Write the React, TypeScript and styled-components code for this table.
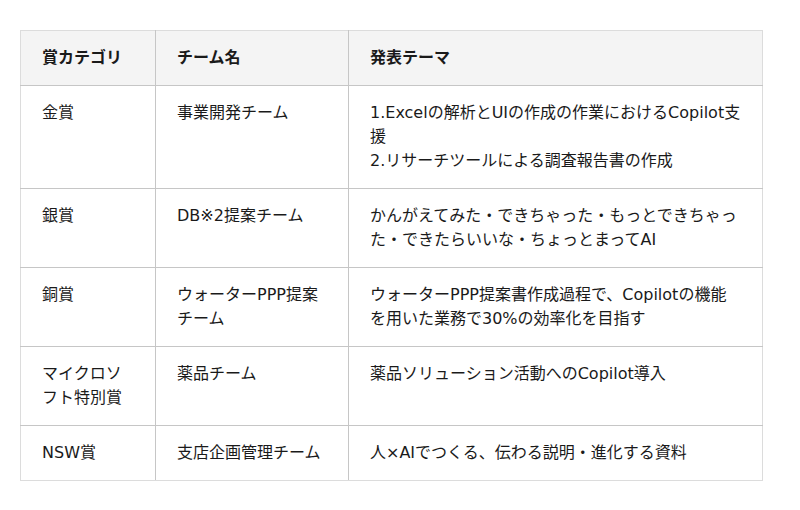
import * as React from 'react';
import styled, { createGlobalStyle } from 'styled-components';

const GlobalStyle = createGlobalStyle`
    body {
        margin: 0;
        background: #fff;
        font-family: "DejaVu Sans", "Noto Sans CJK JP", sans-serif;
        color: #1a1a1a;
    }
`;

const Page = styled.div`
    padding: 30px 38px 30px 20px;
`;

const Table = styled.table`
    width: 742px;
    border-collapse: collapse;
    table-layout: fixed;
    border: 1px solid #dcdcdc;
    font-size: 16px;
    line-height: 24px;
`;

const HeadCell = styled.th<{ $width: number }>`
    box-sizing: border-box;
    width: ${p => p.$width}px;
    background: #f4f4f4;
    text-align: left;
    font-weight: 700;
    padding: 15px 21px;
    border: 1px solid #c6c6c6;
    border-top-color: #dcdcdc;
    &:first-child { border-left-color: #dcdcdc; }
    &:last-child { border-right-color: #dcdcdc; }
`;

const Cell = styled.td`
    vertical-align: top;
    padding: 15px 21px;
    border: 1px solid #c6c6c6;
    word-break: break-all;
    &:first-child { border-left-color: #dcdcdc; }
    &:last-child { border-right-color: #dcdcdc; }
    tr:last-child > & { border-bottom-color: #dcdcdc; }
`;

interface AwardRow {
    category: string;
    team: string;
    theme: string[];
}

const rows: AwardRow[] = [
    {
        category: '金賞',
        team: '事業開発チーム',
        theme: ['1.Excelの解析とUIの作成の作業におけるCopilot支援', '2.リサーチツールによる調査報告書の作成'],
    },
    {
        category: '銀賞',
        team: 'DB※2提案チーム',
        theme: ['かんがえてみた・できちゃった・もっとできちゃった・できたらいいな・ちょっとまってAI'],
    },
    {
        category: '銅賞',
        team: 'ウォーターPPP提案チーム',
        theme: ['ウォーターPPP提案書作成過程で、Copilotの機能を用いた業務で30%の効率化を目指す'],
    },
    {
        category: 'マイクロソフト特別賞',
        team: '薬品チーム',
        theme: ['薬品ソリューション活動へのCopilot導入'],
    },
    {
        category: 'NSW賞',
        team: '支店企画管理チーム',
        theme: ['人×AIでつくる、伝わる説明・進化する資料'],
    },
];

export default function App() {
    return (
        <>
            <GlobalStyle />
            <Page>
                <Table>
                    <thead>
                        <tr>
                            <HeadCell $width={135}>賞カテゴリ</HeadCell>
                            <HeadCell $width={193}>チーム名</HeadCell>
                            <HeadCell $width={414}>発表テーマ</HeadCell>
                        </tr>
                    </thead>
                    <tbody>
                        {rows.map(row => (
                            <tr key={row.category}>
                                <Cell>{row.category}</Cell>
                                <Cell>{row.team}</Cell>
                                <Cell>
                                    {row.theme.map((line, i) => (
                                        <div key={i}>{line}</div>
                                    ))}
                                </Cell>
                            </tr>
                        ))}
                    </tbody>
                </Table>
            </Page>
        </>
    );
}
